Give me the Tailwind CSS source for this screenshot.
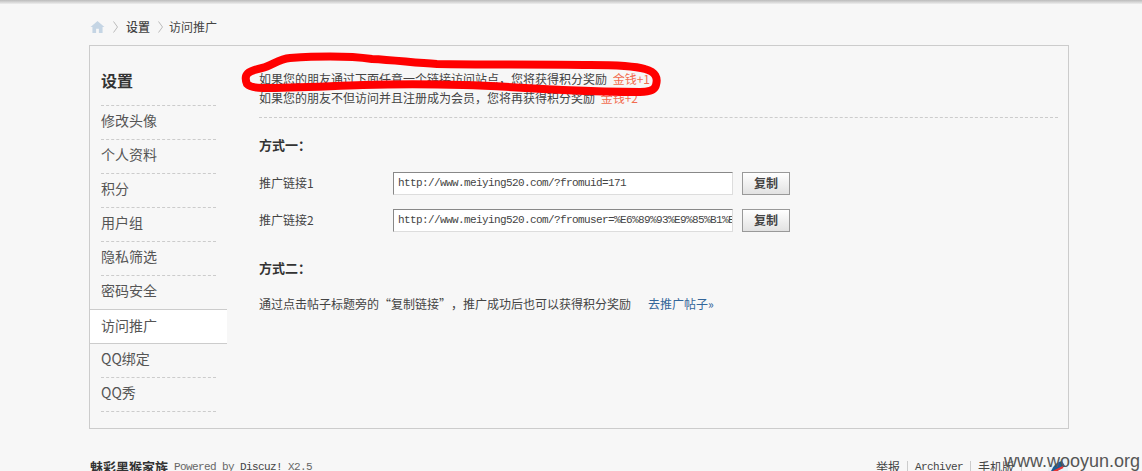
<!DOCTYPE html>
<html lang="zh-CN">
<head>
  <meta charset="UTF-8">
  <title>访问推广</title>
  <script src="https://cdn.jsdelivr.net/npm/@tailwindcss/browser@4"></script>
</head>
<body class="relative h-[471px] overflow-hidden bg-[#f7f7f7] text-[12px] text-[#444] font-['Liberation_Mono','Noto_Sans_CJK_SC',monospace]">
  <div class="h-[4px] bg-gradient-to-b from-[#bbb] to-[#eee]"></div>

  <!-- breadcrumb -->
  <div class="ml-[90px] mt-[16px] flex h-[14px] items-center gap-[8px] leading-[14px] font-['Noto_Sans_CJK_SC',sans-serif] text-[#444]">
    <svg width="15" height="12" viewBox="0 0 15 13"><path d="M7.500 0 15 6.500H13V13H9V8.500H6V13H2V6.500H0Z" fill="#c5d5e4"/></svg>
    <svg width="5" height="12" viewBox="0 0 5 12"><path d="M.5.500 4.500 6 .5 11.500" fill="none" stroke="#bbb"/></svg>
    <span class="font-medium">设置</span>
    <svg width="5" height="12" viewBox="0 0 5 12"><path d="M.5.500 4.500 6 .5 11.500" fill="none" stroke="#bbb"/></svg>
    <span class="-ml-[2px]">访问推广</span>
  </div>

  <!-- main box -->
  <div class="ml-[89px] mt-[11px] flex h-[384px] w-[980px] border border-[#ccc]">
    <div class="w-[137px] shrink-0 pt-[24px] font-['Noto_Sans_CJK_SC',sans-serif] text-[14px] text-[#555]">
      <h2 class="mx-[11px] h-[36px] border-b border-dashed border-[#ccc] text-[16px] leading-[20px] font-bold text-[#333]">设置</h2>
      <ul>
        <li class="mx-[11px] h-[34px] border-b border-dashed border-[#ccc] leading-[29px]">修改头像</li>
        <li class="mx-[11px] h-[34px] border-b border-dashed border-[#ccc] leading-[29px]">个人资料</li>
        <li class="mx-[11px] h-[34px] border-b border-dashed border-[#ccc] leading-[29px]">积分</li>
        <li class="mx-[11px] h-[34px] border-b border-dashed border-[#ccc] leading-[29px]">用户组</li>
        <li class="mx-[11px] h-[34px] border-b border-dashed border-[#ccc] leading-[29px]">隐私筛选</li>
        <li class="mx-[11px] h-[34px] border-b border-dashed border-[#ccc] leading-[29px]">密码安全</li>
        <li class="h-[35px] -mt-px border-y border-[#ccc] bg-white pl-[11px] leading-[31px]">访问推广</li>
        <li class="mx-[11px] h-[34px] border-b border-dashed border-[#ccc] leading-[29px]">QQ绑定</li>
        <li class="mx-[11px] h-[34px] border-b border-dashed border-[#ccc] leading-[29px]">QQ秀</li>
      </ul>
    </div>

    <div class="ml-[32px] w-[799px] pt-[23px]">
      <div class="h-[49px] border-b border-dashed border-[#ccc] leading-[19px]">
        <p class="font-['Noto_Sans_CJK_SC',sans-serif]">如果您的朋友通过下面任意一个链接访问站点，您将获得积分奖励 <span class="ml-[3px] text-[#f26c4f]">金钱+1</span></p>
        <p class="font-['Noto_Sans_CJK_SC',sans-serif]">如果您的朋友不但访问并且注册成为会员，您将再获得积分奖励 <span class="ml-[3px] text-[#f26c4f]">金钱+2</span></p>
      </div>

      <h3 class="mt-[17px] text-[13px] leading-[20px] font-bold text-[#333] font-['Noto_Sans_CJK_SC',sans-serif]">方式一：</h3>

      <div class="mt-[17px] flex h-[22px] items-center">
        <span class="w-[134px] font-['Noto_Sans_CJK_SC',sans-serif]">推广链接1</span>
        <div class="h-[23px] w-[340px] overflow-hidden whitespace-nowrap border border-t-[#888] border-l-[#888] border-r-[#ddd] border-b-[#ddd] bg-white pl-[4px] text-[11px] leading-[21px] tracking-[-0.6px] text-[#444]">http://www.meiying520.com/?fromuid=171</div>
        <button class="ml-[9px] h-[23px] w-[48px] border border-[#999] bg-gradient-to-b from-white to-[#e2e2e2] font-bold text-[#444] font-['Noto_Sans_CJK_SC',sans-serif]">复制</button>
      </div>
      <div class="mt-[15px] flex h-[22px] items-center">
        <span class="w-[134px] font-['Noto_Sans_CJK_SC',sans-serif]">推广链接2</span>
        <div class="h-[23px] w-[340px] overflow-hidden whitespace-nowrap border border-t-[#888] border-l-[#888] border-r-[#ddd] border-b-[#ddd] bg-white pl-[4px] text-[11px] leading-[21px] tracking-[-0.6px] text-[#444]">http://www.meiying520.com/?fromuser=%E6%89%93%E9%85%B1%E6%B2%B9</div>
        <button class="ml-[9px] h-[23px] w-[48px] border border-[#999] bg-gradient-to-b from-white to-[#e2e2e2] font-bold text-[#444] font-['Noto_Sans_CJK_SC',sans-serif]">复制</button>
      </div>

      <h3 class="mt-[27px] text-[13px] leading-[20px] font-bold text-[#333] font-['Noto_Sans_CJK_SC',sans-serif]">方式二：</h3>

      <p class="mt-[17px] flex leading-[18px] font-['Noto_Sans_CJK_SC',sans-serif] [text-spacing-trim:space-all]">
        <span class="w-[389px]">通过点击帖子标题旁的“复制链接”，推广成功后也可以获得积分奖励</span>
        <a class="text-[#369]">去推广帖子»</a>
      </p>
    </div>
  </div>

  <!-- footer -->
  <div class="ml-[90px] mr-[74px] mt-[30px] flex h-[16px] items-center justify-between leading-[16px]">
    <div class="flex items-center gap-[6px]">
      <b class="text-[13px] text-[#333] font-['Noto_Sans_CJK_SC',sans-serif]">魅彩黑猴家族</b>
      <span class="text-[11px] tracking-[-0.6px] text-[#666]">Powered by <span class="text-[#444]">Discuz!</span> X2.5</span>
    </div>
    <div class="flex items-center gap-[7px] font-['Noto_Sans_CJK_SC',sans-serif]">
      <span>举报</span><i class="h-[12px] border-l border-[#ccc]"></i>
      <span class="font-['Liberation_Mono'] text-[11px] tracking-[-0.6px]">Archiver</span><i class="h-[12px] border-l border-[#ccc]"></i>
      <span>手机版</span><i class="h-[12px] border-l border-[#ccc]"></i>
      <svg class="ml-[19px]" width="20" height="16" viewBox="0 0 20 16"><rect width="20" height="16" fill="#e8f2f8"/><path d="M3 12Q7 3 14 2L17 7 6 14Z" fill="#1d5c96"/><path d="M5 13 15 8" stroke="#e33" stroke-width="2"/></svg>
    </div>
  </div>

  <!-- red annotation + watermark drawn over the screenshot -->
  <svg class="pointer-events-none absolute left-0 top-0" width="1142" height="471" viewBox="0 0 1142 471">
    <path d="M247 84C243 74 248 71 262 68C272 66 278 59 290 58C320 56 350 56 372 59C395 60 415 63 437 64C480 65 540 64 590 65C615 65 635 66 645 69C656 72 658 78 656 85C655 90 650 92 640 92C610 92 585 91 563 90C530 88 495 86 463 85C430 84 395 84 363 85C330 86 295 88 263 88C255 88 250 87 247 84Z" fill="none" stroke="#f00" stroke-width="8" stroke-linejoin="round"/>
  </svg>
  <span class="absolute right-[2px] top-[450px] font-['Liberation_Sans',sans-serif] text-[18px] leading-[22px] text-[#555]">www.wooyun.org</span>
</body>
</html>
